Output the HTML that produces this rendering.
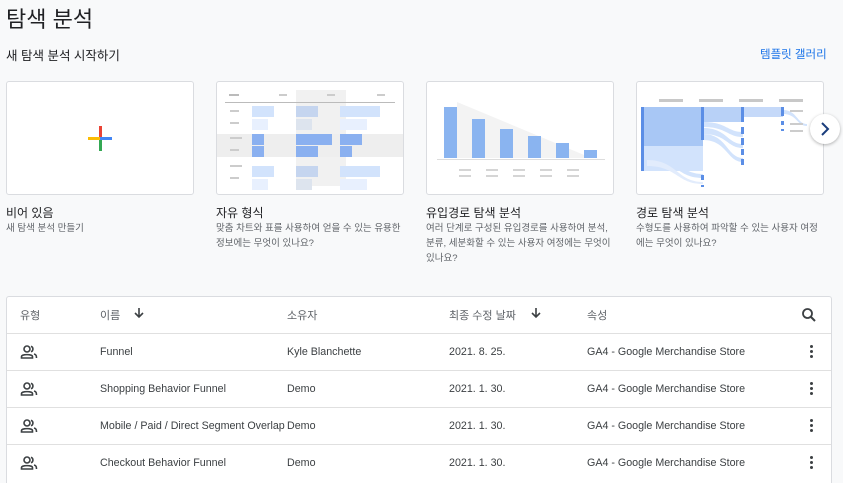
<!DOCTYPE html>
<html style="overflow:hidden;height:483px"><head><meta charset="utf-8"><style>
body{margin:0;width:843px;height:483px;overflow:hidden;background:#f8f9fa;font-family:"Liberation Sans","Noto Sans CJK KR",sans-serif;color:#202124;position:relative}
.a{position:absolute}
.card{position:absolute;top:81px;width:186px;height:112px;background:#fff;border:1px solid #dadce0;border-radius:3px;overflow:hidden}
.ct{position:absolute;top:204px;font-size:12px;color:#202124}
.cd{position:absolute;top:221px;font-size:9.5px;color:#5f6368;line-height:15px;width:190px}
.tbl{position:absolute;left:6px;top:296px;width:824px;height:187px;background:#fff;border:1px solid #dadce0;border-bottom:none;border-radius:3px 3px 0 0;overflow:hidden}
.row{position:absolute;left:0;width:824px;height:37px;border-top:1px solid #e0e0e0;font-size:10.7px;color:#3c4043}
.row span{position:absolute;top:12px}
.hd span{position:absolute;top:10px;font-size:11px;color:#5f6368}
.dots{position:absolute;left:803px;top:11px;width:3px}
.dots i{display:block;width:3px;height:3px;background:#3c4043;border-radius:50%;margin-bottom:2px}
</style></head><body>
<div class="a" style="left:6px;top:2px;font-size:22px;color:#202124">탐색 분석</div>
<div class="a" style="left:6px;top:45px;font-size:12.5px;color:#202124">새 탐색 분석 시작하기</div>
<div class="a" style="left:760px;top:46px;font-size:11.5px;color:#1a73e8">템플릿 갤러리</div>

<div class="card" style="left:6px"><svg width="186" height="112"><rect x="92" y="44" width="3" height="25" fill="#ea4335"/><rect x="92" y="56" width="3" height="13" fill="#34a853"/><rect x="81" y="55" width="12" height="3" fill="#fbbc04"/><rect x="93" y="55" width="12" height="3" fill="#4285f4"/></svg></div>
<div class="card" style="left:216px"><svg width="186" height="112">
<rect x="79" y="8" width="50" height="96" fill="#f1f1f1"/><rect x="0" y="52" width="186" height="23" fill="#eeeeee"/>
<rect x="12" y="12" width="10" height="2" fill="#bbb"/><rect x="62" y="12" width="8" height="2" fill="#ccc"/><rect x="110" y="12" width="8" height="2" fill="#ccc"/><rect x="160" y="12" width="8" height="2" fill="#ccc"/>
<rect x="8" y="20" width="170" height="1" fill="#bbb"/>
<g fill="#ccc"><rect x="13" y="28" width="9" height="2"/><rect x="13" y="40" width="9" height="2"/><rect x="13" y="55" width="12" height="2"/><rect x="13" y="67" width="9" height="2"/><rect x="13" y="83" width="12" height="2"/><rect x="13" y="95" width="9" height="2"/></g>
<g fill="#d2e3fc"><rect x="35" y="24" width="22" height="11"/><rect x="79" y="24" width="22" height="11" fill="#c5d5ef"/><rect x="123" y="24" width="40" height="11"/><rect x="35" y="84" width="22" height="11"/><rect x="79" y="84" width="22" height="11" fill="#c5d5ef"/><rect x="123" y="84" width="40" height="11"/></g>
<g fill="#e8f0fe"><rect x="35" y="37" width="16" height="11"/><rect x="79" y="37" width="16" height="11" fill="#dde4ee"/><rect x="123" y="37" width="27" height="11"/><rect x="35" y="97" width="16" height="11"/><rect x="79" y="97" width="16" height="11" fill="#dde4ee"/><rect x="123" y="97" width="27" height="11"/></g>
<g fill="#8ab0f0"><rect x="35" y="52" width="12" height="11"/><rect x="35" y="64" width="12" height="11"/><rect x="79" y="52" width="36" height="11"/><rect x="79" y="64" width="22" height="11"/><rect x="123" y="52" width="22" height="11"/><rect x="123" y="64" width="12" height="11"/></g>
</svg></div>
<div class="card" style="left:426px"><svg width="186" height="112">
<polygon points="30,20 162,75 162,76 30,76" fill="#f3f3f3"/>
<g fill="#8ab4f0"><rect x="17" y="25" width="13" height="51"/><rect x="45" y="37" width="13" height="39"/><rect x="73" y="47" width="13" height="29"/><rect x="101" y="54" width="13" height="22"/><rect x="129" y="61" width="13" height="15"/><rect x="157" y="68" width="13" height="8"/></g>
<rect x="10" y="77" width="168" height="1" fill="#ddd"/>
<g fill="#d5d5d5"><rect x="32" y="87" width="12" height="2"/><rect x="32" y="93" width="12" height="2"/><rect x="59" y="87" width="12" height="2"/><rect x="59" y="93" width="12" height="2"/><rect x="86" y="87" width="12" height="2"/><rect x="86" y="93" width="12" height="2"/><rect x="113" y="87" width="12" height="2"/><rect x="113" y="93" width="12" height="2"/><rect x="140" y="87" width="12" height="2"/><rect x="140" y="93" width="12" height="2"/></g>
</svg></div>
<div class="card" style="left:636px"><svg width="186" height="112">
<g fill="#c8c8c8"><rect x="22" y="17" width="24" height="3"/><rect x="62" y="17" width="24" height="3"/><rect x="102" y="17" width="24" height="3"/><rect x="142" y="17" width="24" height="3"/></g>
<rect x="6" y="25" width="60" height="39" fill="#a8c7f5"/><rect x="6" y="64" width="60" height="25" fill="#d2e3fc"/>
<rect x="66" y="25" width="40" height="15" fill="#b8d1f7"/><rect x="106" y="25" width="40" height="10" fill="#c5d9f9"/>
<path d="M66 40 C90 40 90 50 106 50 L106 55 C90 55 90 45 66 45Z" fill="#d2e3fc"/>
<path d="M66 46 C90 46 90 62 106 62 L106 66 C90 66 90 52 66 52Z" fill="#d2e3fc"/>
<path d="M66 52 C90 52 90 76 106 76 L106 80 C90 80 90 58 66 58Z" fill="#d2e3fc"/>
<path d="M10 70 C40 70 40 92 66 92 L66 96 C40 96 40 78 10 78Z" fill="#d2e3fc"/>
<path d="M10 78 C40 78 40 100 66 100 L66 102 C40 102 40 84 10 84Z" fill="#e2ecfc"/>
<path d="M146 28 C160 28 160 42 170 42 L170 44 C160 44 160 32 146 32Z" fill="#d2e3fc"/>
<g fill="#5b8ee6"><rect x="4" y="25" width="3" height="64"/><rect x="64" y="25" width="3" height="33"/><rect x="64" y="93" width="3" height="5"/><rect x="64" y="103" width="3" height="2"/><rect x="104" y="25" width="3" height="15"/><rect x="104" y="45" width="3" height="7"/><rect x="104" y="56" width="3" height="7"/><rect x="104" y="67" width="3" height="6"/><rect x="104" y="77" width="3" height="6"/><rect x="144" y="25" width="3" height="9"/><rect x="144" y="39" width="3" height="4"/><rect x="144" y="47" width="3" height="2"/></g>
<g fill="#ccc"><rect x="153" y="28" width="13" height="2"/><rect x="153" y="41" width="13" height="2"/><rect x="153" y="48" width="13" height="2"/></g>
</svg></div>
<div class="a" style="left:810px;top:114px;width:30px;height:30px;border-radius:50%;background:#fff;box-shadow:0 1px 3px rgba(0,0,0,.3)"><svg width="30" height="30"><path d="M12 9 L18 15 L12 21" stroke="#1a3d7c" stroke-width="2" fill="none"/></svg></div>

<div class="ct" style="left:6px">비어 있음</div><div class="cd" style="left:6px">새 탐색 분석 만들기</div>
<div class="ct" style="left:216px">자유 형식</div><div class="cd" style="left:216px">맞춤 차트와 표를 사용하여 얻을 수 있는 유용한 정보에는 무엇이 있나요?</div>
<div class="ct" style="left:426px">유입경로 탐색 분석</div><div class="cd" style="left:426px">여러 단계로 구성된 유입경로를 사용하여 분석, 분류, 세분화할 수 있는 사용자 여정에는 무엇이 있나요?</div>
<div class="ct" style="left:636px">경로 탐색 분석</div><div class="cd" style="left:636px;width:188px">수형도를 사용하여 파악할 수 있는 사용자 여정에는 무엇이 있나요?</div>

<div class="tbl">
<div class="hd"><span style="left:13px">유형</span><span style="left:93px">이름</span><svg class="a" style="left:126px;top:10px" width="12" height="12"><path d="M6 1 V10 M2 6 L6 10 L10 6" stroke="#3c4043" stroke-width="1.6" fill="none"/></svg><span style="left:280px">소유자</span><span style="left:442px">최종 수정 날짜</span><svg class="a" style="left:523px;top:10px" width="12" height="12"><path d="M6 1 V10 M2 6 L6 10 L10 6" stroke="#3c4043" stroke-width="1.6" fill="none"/></svg><span style="left:580px">속성</span>
<svg class="a" style="left:794px;top:10px" width="16" height="16"><circle cx="6.5" cy="6.5" r="4.5" stroke="#3c4043" stroke-width="1.8" fill="none"/><path d="M10 10 L14 14" stroke="#3c4043" stroke-width="2"/></svg></div>
<div class="row" style="top:36px"><span style="left:13px;top:10px"><svg width="18" height="16"><circle cx="7" cy="5" r="3" stroke="#3c4043" stroke-width="1.6" fill="none"/><path d="M1.5 14 V12.5 C1.5 10 12.5 10 12.5 12.5 V14Z" stroke="#3c4043" stroke-width="1.6" fill="none"/><path d="M11 2.2 A3 3 0 0 1 11 7.8 M14 10 C16 10.5 16.5 11.5 16.5 14" stroke="#3c4043" stroke-width="1.6" fill="none"/></svg></span><span style="left:93px">Funnel</span><span style="left:280px">Kyle Blanchette</span><span style="left:442px">2021. 8. 25.</span><span style="left:580px">GA4 - Google Merchandise Store</span><div class="dots"><i></i><i></i><i></i></div></div>
<div class="row" style="top:73px"><span style="left:13px;top:10px"><svg width="18" height="16"><circle cx="7" cy="5" r="3" stroke="#3c4043" stroke-width="1.6" fill="none"/><path d="M1.5 14 V12.5 C1.5 10 12.5 10 12.5 12.5 V14Z" stroke="#3c4043" stroke-width="1.6" fill="none"/><path d="M11 2.2 A3 3 0 0 1 11 7.8 M14 10 C16 10.5 16.5 11.5 16.5 14" stroke="#3c4043" stroke-width="1.6" fill="none"/></svg></span><span style="left:93px">Shopping Behavior Funnel</span><span style="left:280px">Demo</span><span style="left:442px">2021. 1. 30.</span><span style="left:580px">GA4 - Google Merchandise Store</span><div class="dots"><i></i><i></i><i></i></div></div>
<div class="row" style="top:110px"><span style="left:13px;top:10px"><svg width="18" height="16"><circle cx="7" cy="5" r="3" stroke="#3c4043" stroke-width="1.6" fill="none"/><path d="M1.5 14 V12.5 C1.5 10 12.5 10 12.5 12.5 V14Z" stroke="#3c4043" stroke-width="1.6" fill="none"/><path d="M11 2.2 A3 3 0 0 1 11 7.8 M14 10 C16 10.5 16.5 11.5 16.5 14" stroke="#3c4043" stroke-width="1.6" fill="none"/></svg></span><span style="left:93px">Mobile / Paid / Direct Segment Overlap</span><span style="left:280px">Demo</span><span style="left:442px">2021. 1. 30.</span><span style="left:580px">GA4 - Google Merchandise Store</span><div class="dots"><i></i><i></i><i></i></div></div>
<div class="row" style="top:147px"><span style="left:13px;top:10px"><svg width="18" height="16"><circle cx="7" cy="5" r="3" stroke="#3c4043" stroke-width="1.6" fill="none"/><path d="M1.5 14 V12.5 C1.5 10 12.5 10 12.5 12.5 V14Z" stroke="#3c4043" stroke-width="1.6" fill="none"/><path d="M11 2.2 A3 3 0 0 1 11 7.8 M14 10 C16 10.5 16.5 11.5 16.5 14" stroke="#3c4043" stroke-width="1.6" fill="none"/></svg></span><span style="left:93px">Checkout Behavior Funnel</span><span style="left:280px">Demo</span><span style="left:442px">2021. 1. 30.</span><span style="left:580px">GA4 - Google Merchandise Store</span><div class="dots"><i></i><i></i><i></i></div></div>
</div>
</body></html>
